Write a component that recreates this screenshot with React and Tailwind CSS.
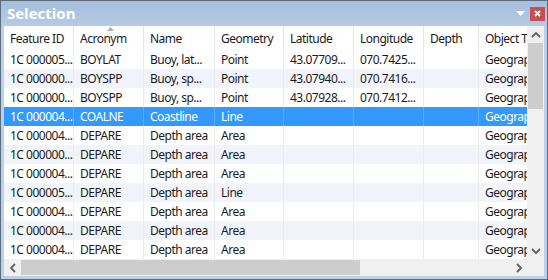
import React from 'react';

const columns = [
  { title: 'Feature ID', w: 'w-[70px]' },
  { title: 'Acronym', w: 'w-[70px]', sorted: true },
  { title: 'Name', w: 'w-[71px]' },
  { title: 'Geometry', w: 'w-[69px]' },
  { title: 'Latitude', w: 'w-[70px]' },
  { title: 'Longitude', w: 'w-[70px]' },
  { title: 'Depth', w: 'w-[55px]' },
  { title: 'Object Type', w: 'w-[60px]' },
];

const rows = [
  ['1C 000005...', 'BOYLAT', 'Buoy, lat...', 'Point', '43.07709...', '070.7425...', '', 'Geographic'],
  ['1C 000000...', 'BOYSPP', 'Buoy, sp...', 'Point', '43.07940...', '070.7416...', '', 'Geographic'],
  ['1C 000000...', 'BOYSPP', 'Buoy, sp...', 'Point', '43.07928...', '070.7412...', '', 'Geographic'],
  ['1C 000004...', 'COALNE', 'Coastline', 'Line', '', '', '', 'Geographic'],
  ['1C 000004...', 'DEPARE', 'Depth area', 'Area', '', '', '', 'Geographic'],
  ['1C 000000...', 'DEPARE', 'Depth area', 'Area', '', '', '', 'Geographic'],
  ['1C 000004...', 'DEPARE', 'Depth area', 'Area', '', '', '', 'Geographic'],
  ['1C 000005...', 'DEPARE', 'Depth area', 'Line', '', '', '', 'Geographic'],
  ['1C 000004...', 'DEPARE', 'Depth area', 'Area', '', '', '', 'Geographic'],
  ['1C 000004...', 'DEPARE', 'Depth area', 'Area', '', '', '', 'Geographic'],
  ['1C 000004...', 'DEPARE', 'Depth area', 'Area', '', '', '', 'Geographic'],
];

const SELECTED = 3;

const Chevron = ({ dir }) => {
  const d = {
    up: 'M1 6 L5 2 L9 6',
    down: 'M1 2 L5 6 L9 2',
    left: 'M6 1 L2 5 L6 9',
    right: 'M2 1 L6 5 L2 9',
  }[dir];
  const vertical = dir === 'up' || dir === 'down';
  return (
    <svg width={vertical ? 10 : 8} height={vertical ? 8 : 10} viewBox={vertical ? '0 0 10 8' : '0 0 8 10'}>
      <path d={d} fill="none" stroke="#606060" strokeWidth="1.8" />
    </svg>
  );
};

export default function App() {
  return (
    <div className="w-[548px] h-[280px] flex flex-col bg-[#b9d1ea] border border-[#5d6b7a] font-['Noto_Sans',sans-serif] text-[12px] tracking-[-0.5px] text-[#1b1b1b] overflow-hidden">
      {/* Title bar */}
      <div className="h-[25px] shrink-0 flex items-center pl-[6px] pr-[2px] bg-gradient-to-b from-[#a6bedb] to-[#b6cbe5]">
        <span className="text-white font-bold text-[15px] leading-none tracking-[0px] font-['Open_Sans',sans-serif]">Selection</span>
        <div className="ml-auto flex items-center gap-[5px]">
          <svg width="9" height="5" viewBox="0 0 9 5">
            <path d="M0 0 L9 0 L4.5 5 Z" fill="#ffffff" />
          </svg>
          <div className="w-[15px] h-[14px] bg-[#c75050] flex items-center justify-center">
            <svg width="7" height="7" viewBox="0 0 7 7">
              <path d="M1 1 L6 6 M6 1 L1 6" stroke="#ffffff" strokeWidth="1.8" />
            </svg>
          </div>
        </div>
      </div>

      {/* Grid area */}
      <div className="flex-1 mx-[3px] flex flex-col bg-white min-h-0">
        <div className="flex flex-1 min-h-0">
          <div className="flex-1 min-w-0 overflow-hidden">
            {/* Header */}
            <div className="flex h-[24px] bg-white">
              {columns.map((c) => (
                <div
                  key={c.title}
                  className={`${c.w} shrink-0 relative flex items-center px-[6px] pt-[1px] border-r border-[#e5e5e5] whitespace-nowrap overflow-hidden`}
                >
                  {c.sorted && (
                    <svg className="absolute left-[33px] top-[1px]" width="7" height="4" viewBox="0 0 7 4">
                      <path d="M0 4 L3.5 0 L7 4 Z" fill="#9fb1c6" />
                    </svg>
                  )}
                  {c.title}
                </div>
              ))}
            </div>
            {/* Rows */}
            {rows.map((r, i) => {
              const sel = i === SELECTED;
              const bg = sel ? 'bg-[#3399ff] text-white' : i % 2 === 1 ? 'bg-[#f1f5fb]' : 'bg-white';
              return (
                <div key={i} className={`flex h-[19px] ${bg}`}>
                  {r.map((v, j) => (
                    <div
                      key={j}
                      className={`${columns[j].w} shrink-0 flex items-center px-[6px] border-r ${sel ? 'border-[#5aadff]' : 'border-[#ececec]'} whitespace-nowrap overflow-hidden`}
                    >
                      {v}
                    </div>
                  ))}
                </div>
              );
            })}
          </div>
          {/* Vertical scrollbar */}
          <div className="w-[17px] shrink-0 flex flex-col bg-[#f0f0f0]">
            <div className="h-[17px] flex items-center justify-center">
              <Chevron dir="up" />
            </div>
            <div className="flex-1 flex flex-col">
              <div className="h-[66px] mx-[1px] bg-[#cdcdcd]" />
            </div>
            <div className="h-[17px] flex items-center justify-center">
              <Chevron dir="down" />
            </div>
          </div>
        </div>
        {/* Horizontal scrollbar */}
        <div className="h-[17px] shrink-0 flex bg-[#f0f0f0]">
          <div className="flex-1 flex">
            <div className="w-[17px] flex items-center justify-center">
              <Chevron dir="left" />
            </div>
            <div className="flex-1 flex items-stretch">
              <div className="w-[339px] my-[1px] bg-[#cdcdcd]" />
            </div>
            <div className="w-[17px] flex items-center justify-center">
              <Chevron dir="right" />
            </div>
          </div>
          <div className="w-[17px] bg-[#f0f0f0]" />
        </div>
      </div>
      <div className="h-[3px] shrink-0" />
    </div>
  );
}
